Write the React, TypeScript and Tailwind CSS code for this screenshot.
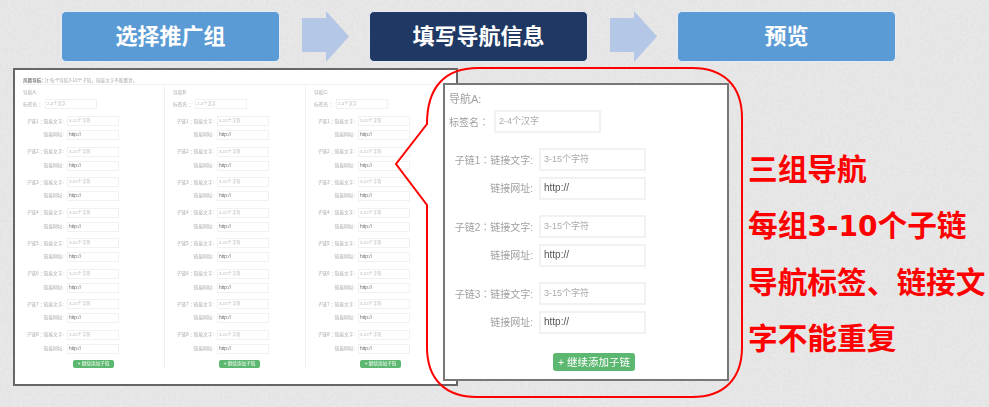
const font = { fontFamily: '"Liberation Sans", "Noto Sans CJK SC", sans-serif' };

const steps = [
  { title: '选择推广组', bg: 'bg-[#5b9bd5]', arrow: true },
  { title: '填写导航信息', bg: 'bg-[#1f3864]', arrow: true },
  { title: '预览', bg: 'bg-[#5b9bd5]', arrow: false },
];

const columns = [
  { name: '导航A:', width: 'w-[150px]', divider: 'border-r', btn: 'ml-[50px]' },
  { name: '导航B:', width: 'w-[141px]', divider: 'border-r', btn: 'ml-[46px]' },
  { name: '导航C:', width: 'flex-1', divider: '', btn: 'ml-[46px]' },
];

const miniLinks = [1, 2, 3, 4, 5, 6, 7, 8];
const bigLinks = [1, 2, 3];

const Arrow = () => (
  <svg width="48" height="52" viewBox="0 0 48 52" className="ml-[22px] mr-[19px] shrink-0">
    <path d="M0 7H24V0L47 25.5L24 51V41H0Z" fill="#b4c7e7" />
  </svg>
);

// the full-width colon sits centred in the reference, which is the TC form
const Colon = () => <span className="font-['Noto_Sans_CJK_TC']">：</span>;

const MiniBox = ({ text, dark }: { text: string; dark?: boolean }) => (
  <div className={`w-[52px] h-[10px] border border-[#f1f1f1] pl-[1px] leading-[8px] ${dark ? 'text-[#666666] text-[4.8px]' : 'text-[#b8b8b8] text-[4.3px]'}`}>
    {text}
  </div>
);

const MiniColumn = ({ col }: { col: (typeof columns)[number] }) => (
  <div className={`${col.width} ${col.divider} border-[#f1f1f1] pl-[8px] text-[#ababab] text-[4.8px]`}>
    <div className="h-[10px] leading-[10px] mt-[3px]">{col.name}</div>
    <div className="flex items-center h-[10px] mt-[1px] mb-[7px]">
      <span className="w-[22px] whitespace-nowrap">标签名<Colon /></span>
      <div className="w-[52px] h-[10px] border border-[#f1f1f1] pl-[1px] text-[4.3px] leading-[8px] text-[#b8b8b8]">2-4个汉字</div>
    </div>
    {miniLinks.map((n) => (
      <div key={n} className="mb-[6.5px]">
        <div className="flex items-center mb-[4px]">
          <span className="w-[41px] mr-[3px] text-right whitespace-nowrap">子链{n}<Colon />链接文字:</span>
          <MiniBox text="3-15个字符" />
        </div>
        <div className="flex items-center">
          <span className="w-[41px] mr-[3px] text-right whitespace-nowrap">链接网址:</span>
          <MiniBox text="http://" dark />
        </div>
      </div>
    ))}
    <div className={`${col.btn} mt-[2px] w-[41px] h-[8px] rounded-[2px] bg-[#5cb870] text-white text-[4.6px] leading-[8px] text-center whitespace-nowrap`}>
      + 继续添加子链
    </div>
  </div>
);

const BigBox = ({ text, dark }: { text: string; dark?: boolean }) => (
  <div className={`w-[107px] h-[23px] border-2 border-[#f2f2f2] bg-white pl-[3px] leading-[18px] ${dark ? 'text-[#555555] text-[10px]' : 'text-[#aaaaaa] text-[9px]'}`}>
    {text}
  </div>
);

export default function App() {
  return (
    <div className="relative w-[989px] h-[407px] overflow-hidden bg-[#e4e4e4]" style={font}>
      {/* paper texture */}
      <svg className="absolute inset-0 w-full h-full" aria-hidden="true">
        <filter id="paper">
          <feTurbulence type="fractalNoise" baseFrequency="0.35" numOctaves="3" seed="4" />
          <feColorMatrix values="0 0 0 0 1  0 0 0 0 1  0 0 0 0 1  0.9 0 0 0 -0.3" />
        </filter>
        <rect width="100%" height="100%" filter="url(#paper)" opacity="0.45" />
      </svg>

      <div className="relative">
        <div className="flex pt-[11px] pl-[61px]">
          {steps.map((step) => (
            <div key={step.title} className="flex">
              <div className={`${step.bg} w-[219px] h-[51px] rounded-[5px] border border-[#e4ecf5] flex items-center justify-center text-white text-[22px] font-bold`}>
                {step.title}
              </div>
              {step.arrow && <Arrow />}
            </div>
          ))}
        </div>

        <div className="flex mt-[5px] pl-[13px]">
          <div className="w-[445px] h-[318px] border-2 border-[#666666] bg-white shrink-0">
            <div className="blur-[0.4px]">
              <div className="mx-[8px] mt-[8px] h-[7px] border-b border-[#f1f1f1] text-[4.6px] leading-[6px] text-[#ababab] whitespace-nowrap">
                <span className="font-bold text-[#888888]">风舞导航:</span> 注:每个导航3-10个子链，链接文字不能重复。
              </div>
              <div className="flex">
                {columns.map((col) => (
                  <MiniColumn key={col.name} col={col} />
                ))}
              </div>
            </div>
          </div>

          <div className="ml-[290px] mt-[74px] text-[#ff0000] text-[29.7px] leading-[56px] font-bold whitespace-nowrap">
            <div>三组导航</div>
            <div>每组<span className="font-['DejaVu_Sans'] text-[28px]">3-10</span>个子链</div>
            <div>导航标签、链接文</div>
            <div>字不能重复</div>
          </div>
        </div>
      </div>

      {/* enlarged detail over the small form */}
      <div className="absolute left-[443px] top-[83px] w-[286px] h-[298px] border-2 border-[#777777] bg-white text-[#a0a0a0]">
        <div className="blur-[0.25px]">
          <div className="ml-[4px] mt-[7px] h-[14px] text-[11px] leading-[14px]">导航A:</div>
          <div className="flex items-center ml-[4px] mt-[4px] mb-[15px]">
            <span className="w-[45px] text-[10px] whitespace-nowrap">标签名<Colon /></span>
            <div className="w-[107px] h-[23px] border-2 border-[#f2f2f2] pl-[3px] text-[9px] leading-[18px] text-[#aaaaaa]">2-4个汉字</div>
          </div>
          {bigLinks.map((n) => (
            <div key={n} className="mb-[15px]">
              <div className="flex items-center mb-[6px]">
                <span className="w-[88px] mr-[6px] text-right text-[10px] whitespace-nowrap">子链{n}<Colon />链接文字:</span>
                <BigBox text="3-15个字符" />
              </div>
              <div className="flex items-center">
                <span className="w-[88px] mr-[6px] text-right text-[10px] whitespace-nowrap">链接网址:</span>
                <BigBox text="http://" dark />
              </div>
            </div>
          ))}
          <div className="ml-[108px] mt-[19px] w-[82px] h-[18px] rounded-[3px] bg-[#5cb870] text-white text-[10.5px] leading-[18px] text-center whitespace-nowrap">
            + 继续添加子链
          </div>
        </div>
      </div>

      {/* red callout bubble */}
      <svg className="absolute inset-0 w-full h-full pointer-events-none" aria-hidden="true">
        <path
          d="M427 124 C427 88 444 68 478 68 H692 C724 68 742 86 742 118 V347 C742 379 724 397 692 397 H477 C445 397 427 379 427 347 V205 L396 164 Z"
          fill="none"
          stroke="#ff0000"
          strokeWidth="2"
        />
      </svg>
    </div>
  );
}
